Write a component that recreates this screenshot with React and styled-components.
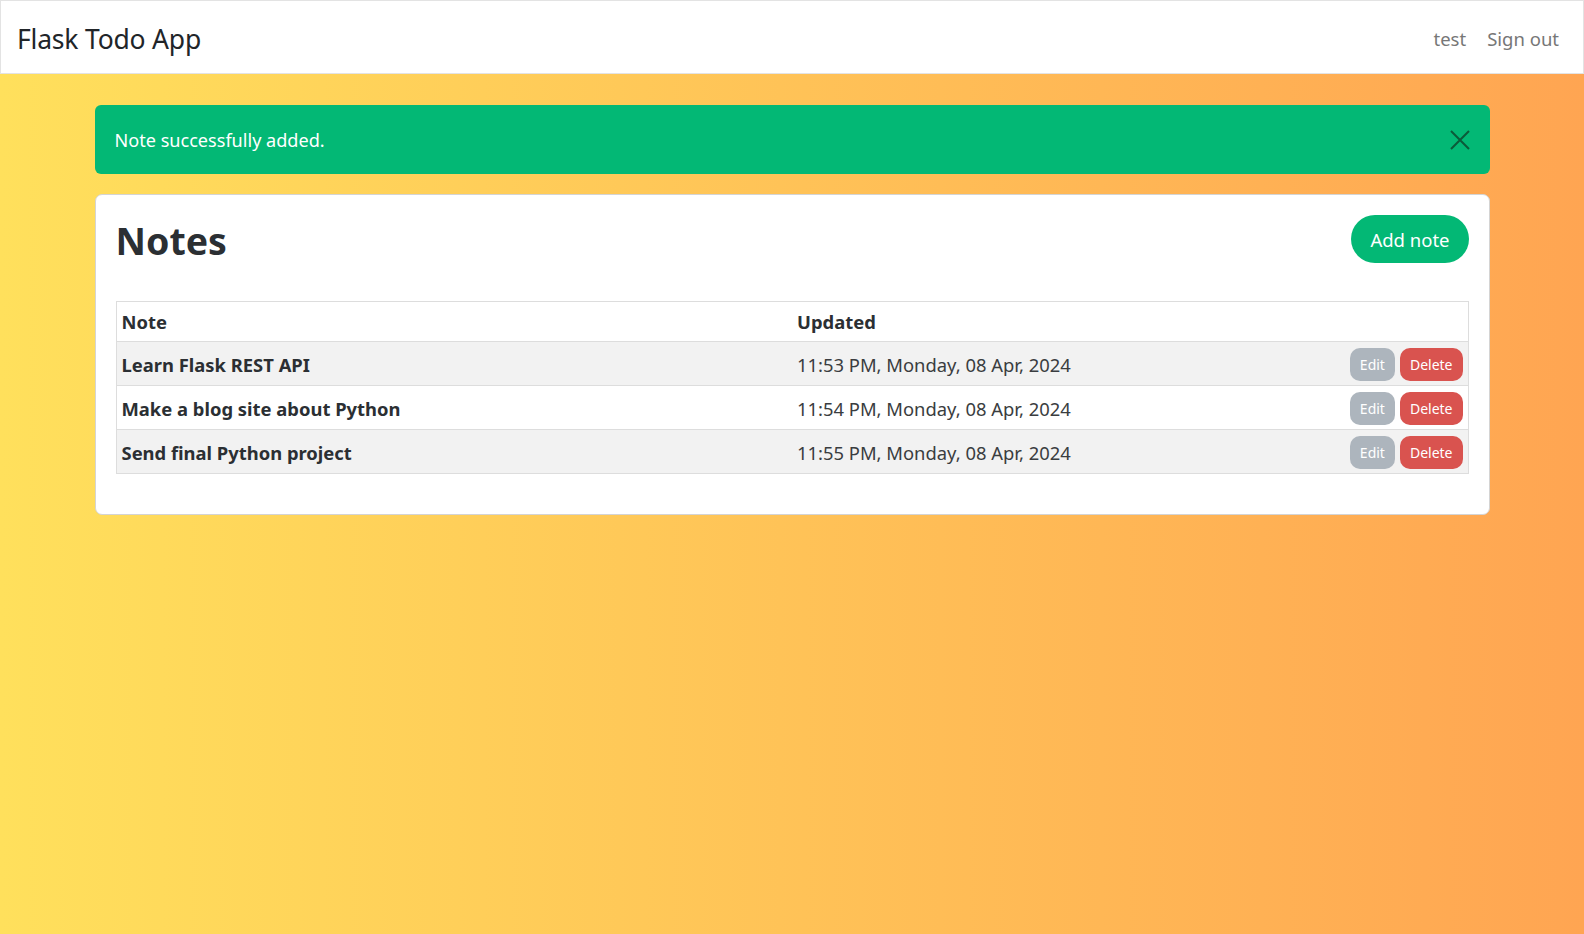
import React, { useState } from "react";
import styled, { createGlobalStyle } from "styled-components";

const GlobalStyle = createGlobalStyle`
  html, body {
    margin: 0;
    padding: 0;
  }
  body {
    min-height: 934px;
    font-family: "Noto Sans", "Open Sans", sans-serif;
    color: #212529;
    background: linear-gradient(to right, #ffe05c, #ffa552);
  }
  * {
    box-sizing: border-box;
  }
`;

const Page = styled.div`
  min-height: 934px;
`;

const Navbar = styled.nav`
  height: 74px;
  background: #fff;
  border: 1px solid #e3e3e3;
  display: flex;
  align-items: center;
  justify-content: space-between;
  padding: 3px 24px 0 16px;
`;

const Brand = styled.a`
  font-size: 26.5px;
  color: #212529;
  text-decoration: none;
  letter-spacing: -0.2px;
`;

const NavLinks = styled.div`
  display: flex;
  gap: 21px;
`;

const NavLink = styled.a`
  font-size: 18.5px;
  color: #777;
  text-decoration: none;
`;

const Container = styled.main`
  max-width: 1395px;
  margin: 31px auto 0;
`;

const Alert = styled.div`
  height: 69px;
  background: #03b875;
  color: #fff;
  border-radius: 6px;
  display: flex;
  align-items: center;
  justify-content: space-between;
  padding: 0 20px;
  font-size: 18.1px;
`;

const CloseButton = styled.button`
  background: none;
  border: 0;
  padding: 0;
  cursor: pointer;
  display: flex;
`;

const Card = styled.section`
  margin-top: 20px;
  background: #fff;
  border: 1px solid #d4d4d4;
  border-radius: 7px;
  padding: 20px 20px 40px;
`;

const CardHeader = styled.div`
  display: flex;
  justify-content: space-between;
  align-items: flex-start;
  margin-bottom: 38px;
`;

const Title = styled.h1`
  margin: 5px 0 0;
  font-size: 37.5px;
  font-weight: 700;
  color: #2b2f33;
  line-height: 1.1;
`;

const PillButton = styled.button`
  border: 0;
  color: #fff;
  font-family: inherit;
  cursor: pointer;
  background: ${(p) => p.$bg};
  font-size: ${(p) => (p.$small ? "14px" : "18.5px")};
  height: ${(p) => (p.$small ? "33px" : "48px")};
  padding: ${(p) => (p.$small ? "0 10px" : "0 19px")};
  border-radius: ${(p) => (p.$small ? "10px" : "999px")};
`;

const Table = styled.table`
  width: 100%;
  border-collapse: collapse;
  border: 1px solid #ddd;
  font-size: 18.4px;
`;

const Th = styled.th`
  text-align: left;
  font-weight: 700;
  padding: 0 5px;
  height: 40px;
  border-bottom: 1px solid #ddd;
  color: #2b2f33;
  width: ${(p) => p.$width || "auto"};
`;

const Row = styled.tr`
  background: ${(p) => (p.$striped ? "#f2f2f2" : "#fff")};
  height: 44px;
  border-bottom: 1px solid #ddd;
`;

const Td = styled.td`
  padding: 1px 5px 0;
  font-weight: ${(p) => (p.$bold ? 700 : 400)};
  color: ${(p) => (p.$bold ? "#2b2f33" : "#3a3d40")};
  text-align: ${(p) => (p.$right ? "right" : "left")};
`;

const Actions = styled.div`
  display: flex;
  justify-content: flex-end;
  gap: 5px;
`;

const notes = [
  { id: 1, text: "Learn Flask REST API", updated: "11:53 PM, Monday, 08 Apr, 2024" },
  { id: 2, text: "Make a blog site about Python", updated: "11:54 PM, Monday, 08 Apr, 2024" },
  { id: 3, text: "Send final Python project", updated: "11:55 PM, Monday, 08 Apr, 2024" },
];

const App = () => {
  const [showAlert, setShowAlert] = useState(true);

  return (
    <Page>
      <GlobalStyle />
      <Navbar>
        <Brand href="#">Flask Todo App</Brand>
        <NavLinks>
          <NavLink href="#">test</NavLink>
          <NavLink href="#">Sign out</NavLink>
        </NavLinks>
      </Navbar>
      <Container>
        {showAlert && (
          <Alert>
            <span>Note successfully added.</span>
            <CloseButton onClick={() => setShowAlert(false)} aria-label="Close">
              <svg width="20" height="20" viewBox="0 0 20 20">
                <path d="M1 1L19 19M19 1L1 19" stroke="#0b5a3a" strokeWidth="2" />
              </svg>
            </CloseButton>
          </Alert>
        )}
        <Card>
          <CardHeader>
            <Title>Notes</Title>
            <PillButton $bg="#03b875">Add note</PillButton>
          </CardHeader>
          <Table>
            <thead>
              <tr>
                <Th $width="50%">Note</Th>
                <Th>Updated</Th>
                <Th />
              </tr>
            </thead>
            <tbody>
              {notes.map((n, i) => (
                <Row key={n.id} $striped={i % 2 === 0}>
                  <Td $bold>{n.text}</Td>
                  <Td>{n.updated}</Td>
                  <Td $right>
                    <Actions>
                      <PillButton $small $bg="#adb5bd">Edit</PillButton>
                      <PillButton $small $bg="#d9534f">Delete</PillButton>
                    </Actions>
                  </Td>
                </Row>
              ))}
            </tbody>
          </Table>
        </Card>
      </Container>
    </Page>
  );
};

export default App;
